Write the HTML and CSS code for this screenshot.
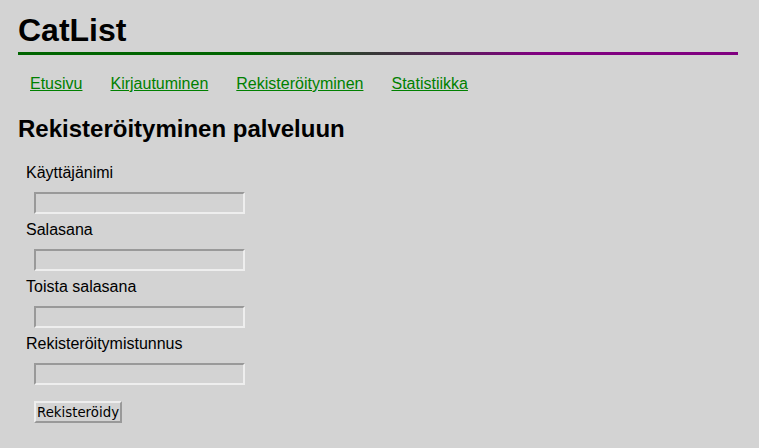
FILE: index.html
```html
<!DOCTYPE html>
<html lang="fi">
<head>
<meta charset="utf-8">
<title>CatList</title>
<link rel="stylesheet" href="styles.css">
</head>
<body>
<header class="header">
  <h1 class="title">CatList</h1>
  <div class="rule"></div>
</header>
<nav class="nav">
  <a href="#">Etusivu</a>
  <a href="#">Kirjautuminen</a>
  <a href="#">Rekisteröityminen</a>
  <a href="#">Statistiikka</a>
</nav>
<h2 class="subtitle">Rekisteröityminen palveluun</h2>
<form class="form">
  <label class="label">Käyttäjänimi</label>
  <input class="field" type="text">
  <label class="label">Salasana</label>
  <input class="field" type="password">
  <label class="label">Toista salasana</label>
  <input class="field" type="password">
  <label class="label">Rekisteröitymistunnus</label>
  <input class="field" type="text">
  <button class="btn" type="button">Rekisteröidy</button>
</form>
</body>
</html>
```
FILE: styles.css
```css
html, body {
  background: #d3d3d3;
}
body {
  margin: 0;
  padding: 12px 21px 0 18px;
  font-family: "Liberation Sans", Arial, sans-serif;
  color: #000;
}
.title {
  margin: 0;
  font-size: 32px;
  line-height: 37px;
  font-weight: bold;
}
.rule {
  margin-top: 3px;
  height: 3px;
  background: linear-gradient(to right, #006400 0%, #006400 32%, #800080 72%, #800080 100%);
}
.nav {
  display: flex;
  gap: 28px;
  margin-top: 20px;
  padding-left: 12px;
  font-size: 16px;
  line-height: 18px;
}
.nav a {
  color: #008000;
  text-decoration: underline;
}
.subtitle {
  margin: 22px 0 0;
  font-size: 24px;
  line-height: 28px;
  font-weight: bold;
}
.form {
  display: flex;
  flex-direction: column;
  align-items: flex-start;
  padding-left: 8px;
  margin-top: 21px;
}
.label {
  font-size: 16px;
  line-height: 18px;
}
.field {
  box-sizing: border-box;
  width: 211px;
  height: 22px;
  margin: 10px 0 7px 8px;
  padding: 1px 2px;
  background: #d3d3d3;
  border: 2px solid;
  border-color: #999 #eee #eee #999;
  font: 13.33px "DejaVu Sans", sans-serif;
}
.btn {
  box-sizing: border-box;
  margin: 9px 0 0 8px;
  height: 22px;
  width: 88px;
  padding: 0;
  background: #d3d3d3;
  border: 2px solid;
  border-color: #eee #999 #999 #eee;
  font: 13.33px "DejaVu Sans", sans-serif;
  color: #000;
}
```
